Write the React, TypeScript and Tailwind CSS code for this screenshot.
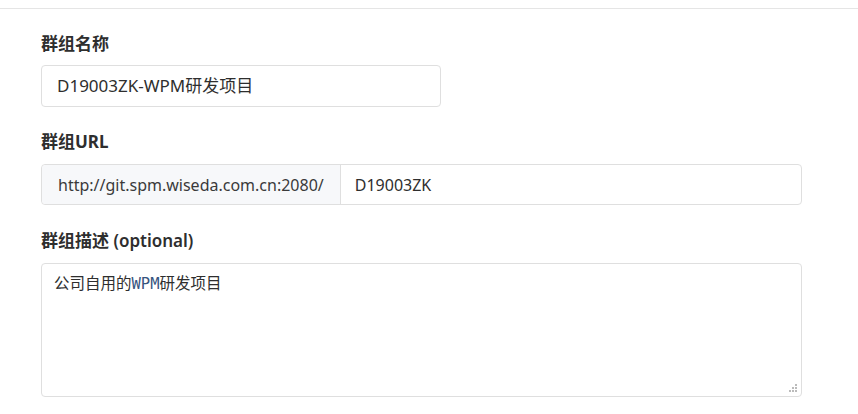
import React from "react";

const font = { fontFamily: '"Noto Sans", "Noto Sans CJK SC", sans-serif' };

export default function App() {
  return (
    <div className="w-[858px] h-[414px] bg-white overflow-hidden text-[#2e2e2e]" style={font}>
      <div className="pt-2">
        <div className="border-t border-[#e5e5e5]" />
      </div>
      <div className="pl-[41px] pt-[23px]">
        <label className="block text-[17px] font-bold leading-[24px]">群组名称</label>
        <div className="mt-[9px] w-[400px] h-[42px] border border-[#dfdfdf] rounded-[4px] flex items-center px-[15px] text-[17px]">
          D19003ZK-WPM研发项目
        </div>

        <label className="block mt-[23px] text-[17px] font-bold leading-[24px]">群组URL</label>
        <div className="mt-[10px] w-[761px] h-[41px] border border-[#dfdfdf] rounded-[4px] flex text-[16px]">
          <div className="flex items-center px-[16px] bg-[#f7f8fa] border-r border-[#dfdfdf] text-[#3a3a3a] rounded-l-[4px]">
            http://git.spm.wiseda.com.cn:2080/
          </div>
          <div className="flex items-center px-[14px]">D19003ZK</div>
        </div>

        <label className="block mt-[24px] text-[17px] leading-[24px]">
          <span className="font-bold">群组描述</span> <span className="font-semibold">(optional)</span>
        </label>
        <div
          className="relative mt-[10px] w-[761px] h-[134px] border border-[#dfdfdf] rounded-[4px] px-[12px] pt-[9px] text-[15.5px]"
          style={{ fontFamily: '"DejaVu Sans Mono", "Noto Sans CJK SC", monospace' }}
        >
          公司自用的<span className="text-[#36557f]">WPM</span>研发项目
          <svg className="absolute right-[4px] bottom-[4px]" width="8" height="8" viewBox="0 0 8 8">
            <rect x="6" y="0" width="2" height="2" fill="#bbb" />
            <rect x="3" y="3" width="2" height="2" fill="#bbb" />
            <rect x="6" y="3" width="2" height="2" fill="#bbb" />
            <rect x="0" y="6" width="2" height="2" fill="#bbb" />
            <rect x="3" y="6" width="2" height="2" fill="#bbb" />
            <rect x="6" y="6" width="2" height="2" fill="#bbb" />
          </svg>
        </div>
      </div>
    </div>
  );
}
